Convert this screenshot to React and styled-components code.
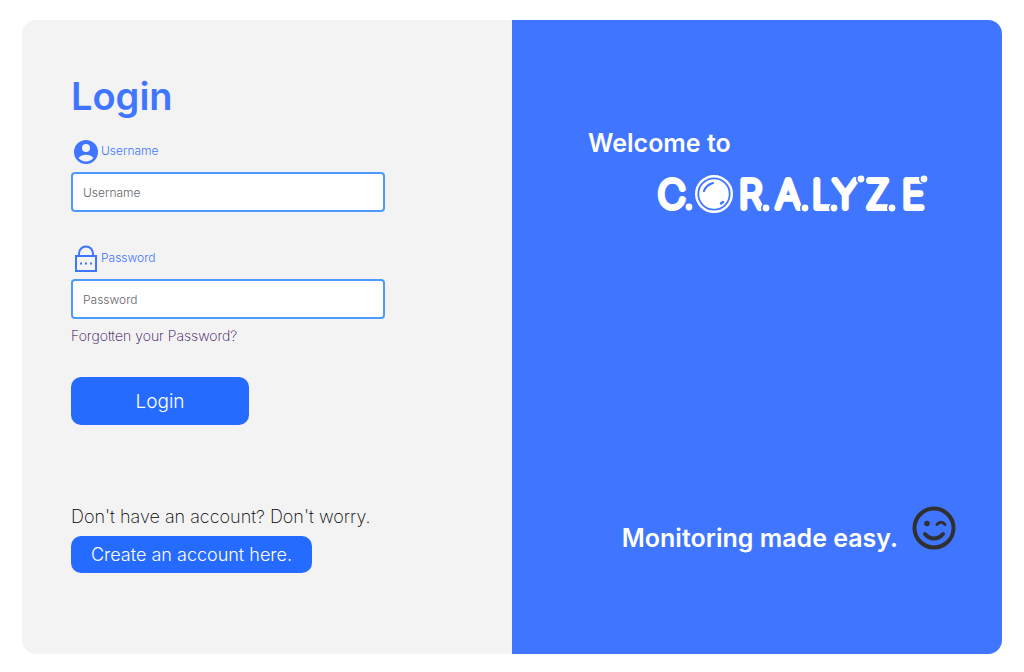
import React from "react";
import styled, { createGlobalStyle } from "styled-components";

const GlobalStyle = createGlobalStyle`
  * { box-sizing: border-box; }
  body { margin: 0; background: #fff; font-family: Inter, "Liberation Sans", sans-serif; font-weight: 300; }
`;
const Card = styled.main`
  display: flex; margin: 20px 22px 18px; min-height: calc(100vh - 38px);
  border-radius: 14px; overflow: hidden;
`;
const FormPanel = styled.section`
  width: 50%; background: #f3f3f3; padding: 52px 49px 80px;
  display: flex; flex-direction: column; align-items: flex-start;
`;
const Title = styled.h1`
  margin: 0 0 16px; font-size: 38px; line-height: 48px; font-weight: 600; color: #3f75ff;
`;
const Form = styled.form`
  display: flex; flex-direction: column; align-items: flex-start; width: 100%;
`;
const Field = styled.div`
  width: 100%; max-width: 314px; margin-bottom: ${(p) => p.$gap}px;
`;
const Label = styled.label`
  display: flex; align-items: center; height: 30px; margin-bottom: 6px;
  font-size: 12px; line-height: 28px; color: #3f75ff;
  svg { width: 30px; height: 30px; flex: none; }
`;
const Input = styled.input`
  display: block; width: 100%; height: 40px; padding: 0 10px; font: inherit; font-size: 12px;
  border: 2px solid #4c9aff; border-radius: 4px; background: #fff; color: #222;
  &::placeholder { color: #666; opacity: 1; }
`;
const ForgotLink = styled.a`
  margin-bottom: 32px; font-size: 14px; line-height: 18px; font-weight: 200; color: #2e0058; text-decoration: none;
`;
const Button = styled.button`
  border: 0; border-radius: 10px; background: #266bff; color: #fff;
  font: inherit; font-size: ${(p) => p.$size}px; width: ${(p) => p.$width}px; height: ${(p) => p.$height}px;
  padding: 0; cursor: pointer;
`;
const SignUp = styled.div`margin-top: 80px;`;
const Prompt = styled.p`margin: 0 0 7px; font-size: 18px; line-height: 24px; font-weight: 200; color: #000;`;
const BrandPanel = styled.section`
  width: 50%; background: #3f75ff; color: #fff; padding: 106px 46px 99px 76px;
  display: flex; flex-direction: column; justify-content: space-between;
  font-size: 25px; font-weight: 600; line-height: 34px;
`;
const Welcome = styled.p`margin: 0 0 8px;`;
const Logo = styled.svg`display: block; width: 276px; height: 48px; margin-left: 66px; overflow: visible;`;
const Tagline = styled.div`
  display: flex; justify-content: flex-end; gap: 14px;
  p { margin: 15px 0 0; white-space: nowrap; }
  svg { width: 44px; height: 44px; flex: none; }
`;

const UserIcon = () => (
  <svg viewBox="0 0 30 30" aria-hidden="true">
    <circle cx="15" cy="16" r="12" fill="#3f75ff" />
    <circle cx="15" cy="12" r="4" fill="#f3f3f3" />
    <path d="M7.500 22C9.500 19.500 12 18.800 15 18.800s5.500.7 7.500 3.200A9.800 9.800 0 0 1 7.500 22z" fill="#f3f3f3" />
  </svg>
);
const LockIcon = () => (
  <svg viewBox="0 0 30 30" aria-hidden="true" fill="none" stroke="#3f75ff" strokeWidth="2">
    <rect x="5" y="13" width="20" height="15" />
    <path d="M8 13V10.500a7 7 0 0 1 14 0V13" />
    <path d="M9 20.500h2M14 20.500h2M19 20.500h2" />
  </svg>
);
const letters = [["C", 4], ["R", 85], ["A", 122], ["L", 158], ["Y", 179], ["Z", 212], ["E", 248]];
const dots = [[35, 39], [112, 40], [151, 40], [180, 40], [207, 11], [238, 40], [270, 11]];
const CoralyzeLogo = () => (
  <Logo viewBox="0 0 276 48" role="img" aria-label="Coralyze" fill="#fff">
    <g fontFamily="Inter, sans-serif" fontWeight="100" fontSize="38" stroke="#fff" strokeWidth="6" strokeLinejoin="round" strokeLinecap="round">
      {letters.map(([c, x]) => <text key={c} x={x} y="40">{c}</text>)}
    </g>
    {dots.map(([x, y]) => <circle key={x} cx={x} cy={y} r="4.200" stroke="#3f75ff" strokeWidth="1.600" />)}
    <circle cx="60" cy="26" r="17.800" fill="none" stroke="#fff" strokeWidth="2.400" />
    <circle cx="60" cy="26" r="14.800" />
    <path d="M50 23q2-6 9-8" fill="none" stroke="#3f75ff" strokeWidth="2.200" strokeLinecap="round" />
    <path d="M67 35.500l2-1.500" stroke="#3f75ff" strokeWidth="2.500" strokeLinecap="round" />
  </Logo>
);
const WinkIcon = () => (
  <svg viewBox="0 0 44 44" aria-hidden="true" fill="none" stroke="#303030" strokeWidth="4" strokeLinecap="round">
    <circle cx="22" cy="22" r="19.500" />
    <circle cx="15" cy="17.500" r="2.800" fill="#303030" stroke="none" />
    <path d="M13 28c5 6 13 6 18 0" />
    <path d="M25 18.500c2-3 6-3 8 0" strokeWidth="3" />
  </svg>
);

export default function App() {
  return (
    <>
      <GlobalStyle />
      <Card>
        <FormPanel>
          <Title>Login</Title>
          <Form onSubmit={(e) => e.preventDefault()}>
            <Field $gap={31}>
              <Label htmlFor="username"><UserIcon />Username</Label>
              <Input id="username" placeholder="Username" />
            </Field>
            <Field $gap={8}>
              <Label htmlFor="password"><LockIcon />Password</Label>
              <Input id="password" type="password" placeholder="Password" />
            </Field>
            <ForgotLink href="#forgot">Forgotten your Password?</ForgotLink>
            <Button type="submit" $size={19} $width={178} $height={48}>Login</Button>
          </Form>
          <SignUp>
            <Prompt>Don't have an account? Don't worry.</Prompt>
            <Button type="button" $size={18} $width={241} $height={37}>Create an account here.</Button>
          </SignUp>
        </FormPanel>
        <BrandPanel>
          <div>
            <Welcome>Welcome to</Welcome>
            <CoralyzeLogo />
          </div>
          <Tagline><p>Monitoring made easy.</p><WinkIcon /></Tagline>
        </BrandPanel>
      </Card>
    </>
  );
}
